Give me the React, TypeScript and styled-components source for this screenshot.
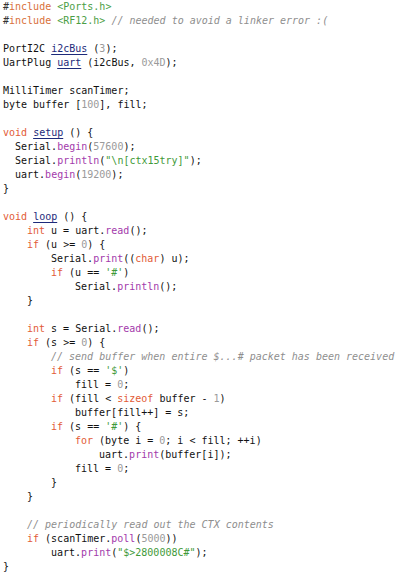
import React from "react";
import styled, { createGlobalStyle } from "styled-components";

const Global = createGlobalStyle`
  html, body { margin: 0; padding: 0; background: #ffffff; }
  body { font-family: "DejaVu Sans Mono", monospace; }
`;

const Code = styled.div`
  padding: 0 0 0 3px;
  font-family: "DejaVu Sans Mono", "Liberation Mono", monospace;
  font-size: 10px;
  line-height: 14px;
  color: #111111;
  white-space: pre;
`;

const Line = styled.div<{ $indent: number }>`
  height: 14px;
  padding-left: ${(p) => p.$indent * 6}px;
`;

const Hash = styled.span`color: #333333;`;
const Pre = styled.span`color: #d9703a;`;
const Inc = styled.span`color: #4b9e45;`;
const Kw = styled.span`color: #e25b36;`;
const Fn = styled.span`color: #a33aab;`;
const Num = styled.span`color: #9a9a9a;`;
const Str = styled.span`color: #3f9a3a;`;
const Com = styled.span`color: #8e8e8e; font-style: italic;`;
const Def = styled.span`color: #1d2a7a; text-decoration: underline; text-underline-offset: 2px;`;

type Tok = string | React.ReactElement;

const lines: [number, Tok[]][] = [
  [0, [<Hash>#</Hash>, <Pre>include</Pre>, " ", <Inc>&lt;Ports.h&gt;</Inc>]],
  [0, [<Hash>#</Hash>, <Pre>include</Pre>, " ", <Inc>&lt;RF12.h&gt;</Inc>, " ", <Com>// needed to avoid a linker error :(</Com>]],
  [0, []],
  [0, ["PortI2C ", <Def>i2cBus</Def>, " (", <Num>3</Num>, ");"]],
  [0, ["UartPlug ", <Def>uart</Def>, " (i2cBus, ", <Num>0x4D</Num>, ");"]],
  [0, []],
  [0, ["MilliTimer scanTimer;"]],
  [0, ["byte buffer [", <Num>100</Num>, "], fill;"]],
  [0, []],
  [0, [<Kw>void</Kw>, " ", <Def>setup</Def>, " () {"]],
  [2, ["Serial.", <Fn>begin</Fn>, "(", <Num>57600</Num>, ");"]],
  [2, ["Serial.", <Fn>println</Fn>, "(", <Str>"\n[ctx15try]"</Str>, ");"]],
  [2, ["uart.", <Fn>begin</Fn>, "(", <Num>19200</Num>, ");"]],
  [0, ["}"]],
  [0, []],
  [0, [<Kw>void</Kw>, " ", <Def>loop</Def>, " () {"]],
  [4, [<Kw>int</Kw>, " u = uart.", <Fn>read</Fn>, "();"]],
  [4, [<Kw>if</Kw>, " (u >= ", <Num>0</Num>, ") {"]],
  [8, ["Serial.", <Fn>print</Fn>, "((", <Kw>char</Kw>, ") u);"]],
  [8, [<Kw>if</Kw>, " (u == ", <Str>'#'</Str>, ")"]],
  [12, ["Serial.", <Fn>println</Fn>, "();"]],
  [4, ["}"]],
  [0, []],
  [4, [<Kw>int</Kw>, " s = Serial.", <Fn>read</Fn>, "();"]],
  [4, [<Kw>if</Kw>, " (s >= ", <Num>0</Num>, ") {"]],
  [8, [<Com>// send buffer when entire $...# packet has been received</Com>]],
  [8, [<Kw>if</Kw>, " (s == ", <Str>'$'</Str>, ")"]],
  [12, ["fill = ", <Num>0</Num>, ";"]],
  [8, [<Kw>if</Kw>, " (fill < ", <Kw>sizeof</Kw>, " buffer - ", <Num>1</Num>, ")"]],
  [12, ["buffer[fill++] = s;"]],
  [8, [<Kw>if</Kw>, " (s == ", <Str>'#'</Str>, ") {"]],
  [12, [<Kw>for</Kw>, " (byte i = ", <Num>0</Num>, "; i < fill; ++i)"]],
  [16, ["uart.", <Fn>print</Fn>, "(buffer[i]);"]],
  [12, ["fill = ", <Num>0</Num>, ";"]],
  [8, ["}"]],
  [4, ["}"]],
  [0, []],
  [4, [<Com>// periodically read out the CTX contents</Com>]],
  [4, [<Kw>if</Kw>, " (scanTimer.", <Fn>poll</Fn>, "(", <Num>5000</Num>, "))"]],
  [8, ["uart.", <Fn>print</Fn>, "(", <Str>"$&gt;2800008C#"</Str>, ");"]],
  [0, ["}"]],
];

export default function App() {
  return (
    <>
      <Global />
      <Code>
        {lines.map(([indent, toks], i) => (
          <Line key={i} $indent={indent}>
            {toks.length === 0
              ? " "
              : toks.map((t, j) => <React.Fragment key={j}>{t}</React.Fragment>)}
          </Line>
        ))}
      </Code>
    </>
  );
}
